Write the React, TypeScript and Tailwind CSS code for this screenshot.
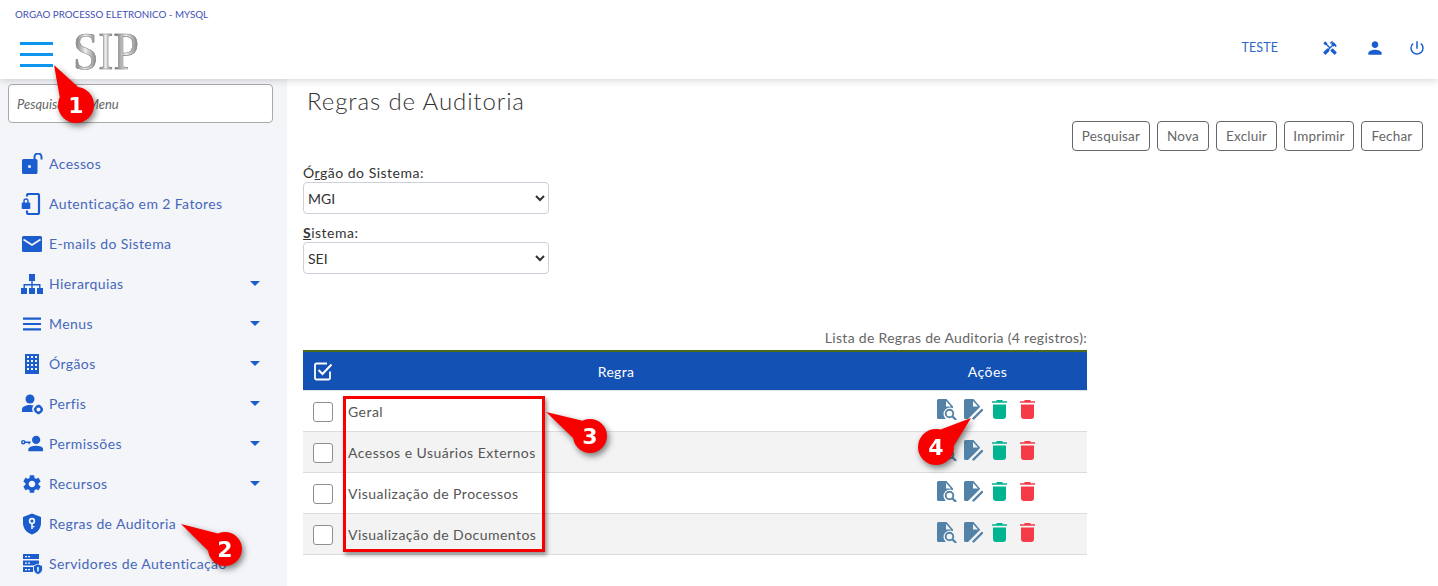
import { MdSettings, MdHandyman, MdPerson, MdPowerSettingsNew, MdArrowDropDown } from "react-icons/md";
import type { ReactNode } from "react";

const ic = "w-[22px] h-[22px] fill-[#1b5dcf]";
const blue = "#1b5dcf";

// sidebar icons, drawn on a 22x22 box
const LockIcon = () => (
  <svg viewBox="0 0 22 22" className={ic}>
    <path d="M2.500 6H15a1.500 1.500 0 0 1 1.500 1.500v12A1.500 1.500 0 0 1 15 21H2.500A1.500 1.500 0 0 1 1 19.500v-12A1.500 1.500 0 0 1 2.500 6z" />
    <circle cx="8.500" cy="13.500" r="1.500" fill="#f4f5f8" />
    <path d="M13.500 6V4a3.500 3.500 0 0 1 7 0v2.500" fill="none" stroke={blue} strokeWidth="2" />
  </svg>
);
const PhoneLockIcon = () => (
  <svg viewBox="0 0 22 22" className={ic}>
    <path d="M6 3.500V2.500A1.500 1.500 0 0 1 7.500 1h9A1.500 1.500 0 0 1 18 2.500v17a1.500 1.500 0 0 1-1.500 1.500h-9A1.500 1.500 0 0 1 6 19.500v-2" fill="none" stroke={blue} strokeWidth="2.200" />
    <path d="M1.500 9.500h.8V8a2.700 2.700 0 0 1 5.400 0v1.500h.8a.8.8 0 0 1 .8.8v4.900a.8.8 0 0 1-.8.8H1.500a.8.8 0 0 1-.8-.8v-4.900a.8.8 0 0 1 .8-.8zM3.700 9.500h2.600V8a1.300 1.300 0 0 0-2.600 0z" fillRule="evenodd" />
  </svg>
);
const MailIcon = () => (
  <svg viewBox="0 0 22 22" className={ic}>
    <rect x="1" y="3" width="20" height="16" rx="1.500" />
    <path d="M2.500 6.500L11 12l8.500-5.500" fill="none" stroke="#f4f5f8" strokeWidth="1.800" />
  </svg>
);
const TreeIcon = () => (
  <svg viewBox="0 0 22 22" className={ic}>
    <path d="M8 1h6v7H8zM0 15h6v6H0zM8 15h6v6H8zM16 15h6v6h-6z" />
    <path d="M10.300 8h1.400v3h7.800v4h-1.400v-2.600h-6.400V15h-1.400v-2.600H3.900V15H2.500v-4h7.800z" />
  </svg>
);
const BarsIcon = () => (
  <svg viewBox="0 0 22 22" className={ic}>
    <path d="M2 4.500h18v2.200H2zM2 9.900h18v2.200H2zM2 15.300h18v2.200H2z" />
  </svg>
);
const BuildingIcon = () => (
  <svg viewBox="0 0 22 22" className={ic}>
    <path d="M4 1h14v20H4z" />
    <path d="M6 3h2v2H6zM10 3h2v2h-2zM14 3h2v2h-2zM6 7h2v2H6zM10 7h2v2h-2zM14 7h2v2h-2zM6 11h2v2H6zM10 11h2v2h-2zM14 11h2v2h-2zM6 15h2v2H6zM10 15h2v2h-2zM14 15h2v2h-2z" fill="#f4f5f8" />
  </svg>
);
const ProfileIcon = () => (
  <svg viewBox="0 0 22 22" className={ic}>
    <circle cx="9" cy="6" r="4.500" />
    <path d="M1 19v-2.500C1 13.500 5 12 9 12c1.300 0 2.500.2 3.600.5A5.500 5.500 0 0 0 12 19z" />
    <circle cx="17.500" cy="16.500" r="3.200" fill="none" stroke={blue} strokeWidth="2.400" />
    <path d="M16.500 11.800h2v1.600h-2zM16.500 19.600h2v1.600h-2zM12.800 15.500h1.600v2h-1.600zM20.600 15.500h1.600v2h-1.600z" />
  </svg>
);
const KeyUserIcon = () => (
  <svg viewBox="0 0 24 22" className="w-[24px] h-[22px] fill-[#1b5dcf]">
    <circle cx="16.500" cy="6.500" r="4.500" />
    <path d="M8 19v-2c0-2.800 5-4 8.500-4s8 1.200 8 4v2z" />
    <circle cx="2.500" cy="9" r="1.700" fill="none" stroke={blue} strokeWidth="1.600" />
    <path d="M4 8.200h6.500v1.600H9.500v1.500H8V9.800H4z" />
  </svg>
);
const GearIcon = () => <MdSettings className="w-[24px] h-[24px] text-[#1b5dcf]" />;
const ShieldIcon = () => (
  <svg viewBox="0 0 22 22" className={ic}>
    <path d="M11 .5l9 3.500v6c0 5.500-3.800 10-9 11.500C5.800 20 2 15.500 2 10V4z" />
    <circle cx="11" cy="8" r="2.400" fill="none" stroke="#f4f5f8" strokeWidth="1.600" />
    <path d="M10.200 10h1.600v6h-1.600zM11.500 13h2v1.300h-2z" fill="#f4f5f8" />
  </svg>
);
const ServerIcon = () => (
  <svg viewBox="0 0 22 22" className={ic}>
    <path d="M2 1h16v5H2zM2 7.500h16v5H2zM2 14h10v5H2z" />
    <path d="M4 3h2v1.200H4zM7 3h2v1.200H7zM4 9.500h2v1.200H4zM7 9.500h2v1.200H7zM4 16h2v1.200H4zM7 16h2v1.200H7z" fill="#f4f5f8" />
    <path d="M17 11l4.500 1.800v3.400c0 2.500-2 4.500-4.500 5.300-2.500-.8-4.500-2.800-4.500-5.300v-3.400z" stroke="#f4f5f8" strokeWidth=".8" />
    <path d="M16.200 14h1.600v4.500h-1.600z" fill="#f4f5f8" />
  </svg>
);

const menu: { label: string; icon: ReactNode; caret?: boolean }[] = [
  { label: "Acessos", icon: <LockIcon /> },
  { label: "Autenticação em 2 Fatores", icon: <PhoneLockIcon /> },
  { label: "E-mails do Sistema", icon: <MailIcon /> },
  { label: "Hierarquias", icon: <TreeIcon />, caret: true },
  { label: "Menus", icon: <BarsIcon />, caret: true },
  { label: "Órgãos", icon: <BuildingIcon />, caret: true },
  { label: "Perfis", icon: <ProfileIcon />, caret: true },
  { label: "Permissões", icon: <KeyUserIcon />, caret: true },
  { label: "Recursos", icon: <GearIcon />, caret: true },
  { label: "Regras de Auditoria", icon: <ShieldIcon /> },
  { label: "Servidores de Autenticação", icon: <ServerIcon /> },
];

const regras = ["Geral", "Acessos e Usuários Externos", "Visualização de Processos", "Visualização de Documentos"];
const botoes = [
  { label: "Pesquisar", w: "w-[78px]" },
  { label: "Nova", w: "w-[52px]" },
  { label: "Excluir", w: "w-[61px]" },
  { label: "Imprimir", w: "w-[70px]" },
  { label: "Fechar", w: "w-[62px]" },
];

const DocSearch = ({ bg }: { bg: string }) => (
  <svg viewBox="0 0 20 21" className="w-[20px] h-[21px] fill-[#5282a8]">
    <path d="M1.500 0H9.500L16 7.500V18.500A1.500 1.500 0 0 1 14.500 20h-13A1.500 1.500 0 0 1 0 18.500v-17A1.500 1.500 0 0 1 1.500 0z" />
    <path d="M9 2L14 7.500H9z" fill={bg} />
    <circle cx="13" cy="15" r="6.500" fill={bg} />
    <circle cx="12.500" cy="14.500" r="3.800" fill={bg} stroke="#5282a8" strokeWidth="1.900" />
    <path d="M15.500 17.500l3 2.800" stroke="#5282a8" strokeWidth="2.200" strokeLinecap="round" />
  </svg>
);
const DocEdit = ({ bg }: { bg: string }) => (
  <svg viewBox="0 0 19 21" className="w-[19px] h-[21px] fill-[#5282a8]">
    <path d="M1.500 0H9.500L16 7.500V8L4 20H1.500A1.500 1.500 0 0 1 0 18.500v-17A1.500 1.500 0 0 1 1.500 0z" />
    <path d="M9 2L14 7.500H9z" fill={bg} />
    <path d="M9.500 19.500L18 11" stroke="#5282a8" strokeWidth="2.400" strokeLinecap="round" />
  </svg>
);
const Trash = ({ color }: { color: string }) => (
  <svg viewBox="0 0 15 19" className="w-[15px] h-[19px]" fill={color}>
    <path d="M4.500 0h6v1.300H15v1.500H0V1.300h4.500z" />
    <path d="M1 4.500h13V16a3 3 0 0 1-3 3H4a3 3 0 0 1-3-3z" />
  </svg>
);

// numbered red callouts of the tutorial, placed over the page
const Callout = ({ n, cx, cy, tx, ty, r = 17 }: { n: number; cx: number; cy: number; tx: number; ty: number; r?: number }) => {
  const a = Math.atan2(ty - cy, tx - cx);
  const s = 0.62;
  const p1 = `${cx + r * Math.cos(a + s)},${cy + r * Math.sin(a + s)}`;
  const p2 = `${cx + r * Math.cos(a - s)},${cy + r * Math.sin(a - s)}`;
  return (
    <g>
      <path d={`M${tx} ${ty}L${p1}L${p2}Z`} fill="#f80000" />
      <circle cx={cx} cy={cy} r={r} fill="#f80000" />
      <text x={cx} y={cy + 8} textAnchor="middle" fill="#fff" fontSize="22" fontWeight="700" fontFamily="'DejaVu Sans', sans-serif">
        {n}
      </text>
    </g>
  );
};

const serifLetter = "bg-gradient-to-r from-[#666] via-[#eee] to-[#777] bg-clip-text text-transparent [-webkit-text-stroke:0.6px_#8a8a8a]";

export default function App() {
  return (
    <div className="relative w-[1438px] h-[586px] overflow-hidden bg-white font-['Lato','Noto_Sans',sans-serif] text-[14px]">
      {/* Header */}
      <header className="relative z-10 h-[79px] bg-white shadow-[0_1px_8px_rgba(0,0,0,0.18)] pl-[15px] pr-[12px] pt-[7px]">
        <div className="text-[9.800px] leading-[14px] text-[#3f4fb4]">ORGAO PROCESSO ELETRONICO - MYSQL</div>
        <div className="flex items-center mt-[8px] h-[50px]">
          <div className="flex flex-col gap-[8px] ml-[5px] w-[33px]">
            <div className="h-[3px] bg-[#0d96f0]" />
            <div className="h-[3px] bg-[#0d96f0]" />
            <div className="h-[3px] bg-[#0d96f0]" />
          </div>
          <div className="ml-[20px] -mt-[6px] flex origin-left scale-x-[0.86] font-['Liberation_Serif',serif] text-[53px] leading-[50px]">
            <span className={serifLetter}>S</span>
            <span className={serifLetter}>I</span>
            <span className={serifLetter}>P</span>
          </div>
          <div className="ml-auto -mt-[12px] flex items-center text-[#1b5dcf]">
            <span className="text-[12.500px] tracking-[0.1px] mr-[44px] text-[#2f66c8]">TESTE</span>
            <MdHandyman className="w-[16px] h-[16px] mr-[27px]" />
            <MdPerson className="w-[20px] h-[20px] mr-[23px]" />
            <MdPowerSettingsNew className="w-[18px] h-[18px]" />
          </div>
        </div>
      </header>

      <div className="flex h-[507px]">
        {/* Sidebar */}
        <aside className="w-[287px] shrink-0 bg-[#f4f5f8] px-[8px] pt-[5px]">
          <div className="w-[265px] h-[39px] rounded-[4px] border border-[#a9a9a9] bg-white flex items-center px-[8px] pt-[2px] italic text-[13px] text-[#666]">
            Pesquisar no Menu
          </div>
          <nav className="mt-[21px] -mx-[8px]">
            {menu.map((m) => (
              <div key={m.label} className="relative flex items-center h-[40px] pl-[21px]">
                <span className="w-[22px] flex justify-center shrink-0">{m.icon}</span>
                <span className="ml-[6px] -mt-[2px] text-[#4668bb] tracking-[0.4px] whitespace-nowrap">{m.label}</span>
                {m.caret && (
                  <MdArrowDropDown className="absolute left-[240px] top-[7px] w-[30px] h-[24px] text-[#1b5dcf]" />
                )}
              </div>
            ))}
          </nav>
        </aside>

        {/* Content */}
        <main className="flex-1 pl-[16px] pr-[15px]">
          <h1 className="ml-[4px] mt-[6px] text-[24px] leading-[32px] font-light text-[#333] tracking-[0.9px]">Regras de Auditoria</h1>
          <div className="flex justify-end gap-[7px] mt-[4px]">
            {botoes.map((b) => (
              <button key={b.label} className={`${b.w} h-[30px] rounded-[4px] border border-[#666] bg-white text-[13.500px] text-[#666] tracking-[0.2px]`}>
                {b.label}
              </button>
            ))}
          </div>
          <div className="w-[246px] mt-[13px]">
            <label className="block h-[18px] leading-[18px] text-[#333] tracking-[0.5px]">
              Ó<u>r</u>gão do Sistema:
            </label>
            <select className="block w-full h-[32px] rounded-[4px] border border-[#ccd0d8] bg-white text-[14px] text-[#333] pt-[1px]">
              <option>MGI</option>
            </select>
            <label className="block mt-[10px] h-[18px] leading-[18px] text-[#333] tracking-[0.5px]">
              <u className="font-bold">S</u>istema:
            </label>
            <select className="block w-full h-[32px] rounded-[4px] border border-[#ccd0d8] bg-white text-[14px] text-[#333] pt-[1px]">
              <option>SEI</option>
            </select>
          </div>

          <div className="w-[784px] mt-[55px]">
            <div className="text-right h-[18px] leading-[18px] text-[#666] tracking-[0.3px]">Lista de Regras de Auditoria (4 registros):</div>
            <div className="mt-[3px] border-t-[2px] border-[#4a6b1a]">
              <div className="flex items-center h-[38px] bg-[#1351b4] text-white tracking-[0.3px]">
                <div className="w-[39px] flex justify-center pl-[1px]">
                  <svg viewBox="0 0 20 20" className="w-[20px] h-[20px]" fill="none" stroke="#fff">
                    <path d="M17 10.500V17a1.500 1.500 0 0 1-1.500 1.500h-12A1.500 1.500 0 0 1 2 17V4a1.500 1.500 0 0 1 1.500-1.500H14" strokeWidth="1.800" />
                    <path d="M5.500 9l4 4L18.500 3.500" strokeWidth="2" />
                  </svg>
                </div>
                <div className="w-[548px] text-center">Regra</div>
                <div className="flex-1 text-center pr-[2px] tracking-[0.5px]">Ações</div>
              </div>
              <div className="border-t-[1px] border-[#dfe1e8]">
                {regras.map((r, i) => (
                  <div key={r} className={`flex items-center border-b border-[#dcdcdc] h-[41px] ${i % 2 ? "bg-[#f3f3f3]" : "bg-white"}`}>
                    <div className="w-[45px] flex justify-center pr-[5px] pt-[2px]">
                      <div className="w-[20px] h-[20px] rounded-[3px] border border-[#8f8f8f] bg-white" />
                    </div>
                    <div className="w-[589px] text-[#555] tracking-[0.47px]">{r}</div>
                    <div className="flex items-start pb-[3px]">
                      <DocSearch bg={i % 2 ? "#f3f3f3" : "#ffffff"} />
                      <span className="ml-[7px]"><DocEdit bg={i % 2 ? "#f3f3f3" : "#ffffff"} /></span>
                      <span className="ml-[9px] mt-[1px]"><Trash color="#00b48f" /></span>
                      <span className="ml-[13px] mt-[1px]"><Trash color="#f53b47" /></span>
                    </div>
                  </div>
                ))}
              </div>
            </div>
          </div>
        </main>
      </div>

      {/* Tutorial annotations */}
      <div className="absolute left-[343px] top-[396px] w-[202px] h-[156px] border-[3px] border-[#f80000] shadow-[2px_3px_4px_rgba(0,0,0,0.4)] z-20" />
      <svg className="absolute inset-0 z-30 w-[1438px] h-[586px] drop-shadow-[2px_3px_3px_rgba(0,0,0,0.5)]" viewBox="0 0 1438 586">
        <Callout n={1} cx={76} cy={105} tx={54} ty={65} r={18} />
        <Callout n={2} cx={225} cy={549} tx={181} ty={524} />
        <Callout n={3} cx={590} cy={436} tx={546} ty={412} />
        <Callout n={4} cx={936} cy={447} tx={971} ty={418} r={18} />
      </svg>
    </div>
  );
}
